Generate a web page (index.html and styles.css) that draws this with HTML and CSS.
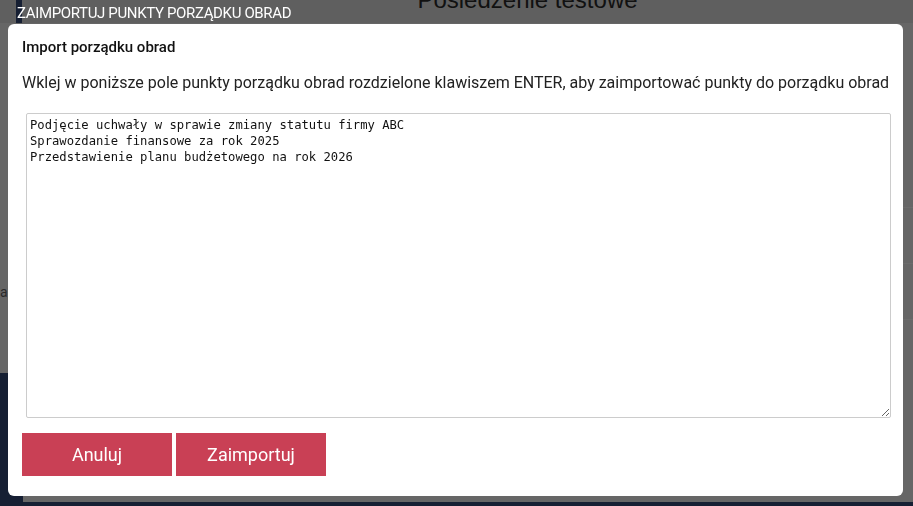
FILE: index.html
```html
<!DOCTYPE html>
<html>
<head>
	<title>Import porządku obrad</title>
	<link rel="stylesheet" href="styles.css">
</head>
<body>
	<div class="page">
		<div class="page_top">
			<div class="page_mark"></div>
			<h1 class="page_heading">Posiedzenie testowe</h1>
		</div>
		<div class="page_body">
			<div class="page_side"></div>
			<div class="page_rows">
				<div class="page_row"></div>
				<div class="page_row"><span class="page_letter">a</span></div>
				<div class="page_row"></div>
			</div>
		</div>
		<div class="page_footer"></div>
	</div>

	<div class="overlay">
		<div class="overlay_title">ZAIMPORTUJ PUNKTY PORZĄDKU OBRAD</div>
		<div class="dialog">
			<h2 class="dialog_title">Import porządku obrad</h2>
			<p class="dialog_text">Wklej w poniższe pole punkty porządku obrad rozdzielone klawiszem ENTER, aby zaimportować punkty do porządku obrad</p>
			<textarea class="dialog_input">Podjęcie uchwały w sprawie zmiany statutu firmy ABC
Sprawozdanie finansowe za rok 2025
Przedstawienie planu budżetowego na rok 2026</textarea>
			<div class="dialog_buttons">
				<button class="dialog_button">Anuluj</button>
				<button class="dialog_button">Zaimportuj</button>
			</div>
		</div>
	</div>
</body>
</html>
```
FILE: styles.css
```css
*{
	margin: 0px;
	padding: 0px;
	box-sizing: border-box;
}
html, body
{
	width: 913px;
	height: 506px;
	overflow: hidden;
	font-family: Roboto, "Liberation Sans", sans-serif;
}
.page
{
	display: flex;
	flex-direction: column;
	width: 913px;
	height: 506px;
	background-color: #666;
}
.page_top
{
	position: relative;
	height: 23px;
	background-color: #5f5f5f;
	display: flex;
	justify-content: center;
}
.page_mark
{
	position: absolute;
	left: 16px;
	top: 0px;
	width: 6px;
	height: 23px;
	background-color: #161f33;
}
.page_heading
{
	margin-top: -14px;
	margin-left: 142px;
	font-family: "Liberation Sans", Arial, sans-serif;
	font-weight: normal;
	font-size: 24px;
	color: #111;
	white-space: nowrap;
}
.page_body
{
	flex: 1;
	display: flex;
}
.page_side
{
	width: 23px;
	margin-top: 350px;
	background-color: #161f33;
}
.page_rows
{
	flex: 1;
	display: flex;
	flex-direction: column;
	padding-top: 184px;
}
.page_row
{
	height: 56px;
	border-top: 1px solid #6c6c6c;
}
.page_letter
{
	display: block;
	margin: 20px 0 0 -23px;
	font-size: 14px;
	color: #2a2a2a;
}
.page_footer
{
	height: 4px;
	background-color: #161f33;
}
.overlay
{
	position: fixed;
	top: 0px;
	left: 0px;
	width: 913px;
	height: 506px;
}
.overlay_title
{
	height: 24px;
	padding: 4px 0 0 17px;
	font-size: 15px;
	letter-spacing: -0.35px;
	color: #fff;
	white-space: nowrap;
}
.dialog
{
	margin-left: 8px;
	width: 895px;
	height: 472px;
	background-color: #fff;
	border-radius: 6px;
	padding: 14px 14px 0 14px;
	display: flex;
	flex-direction: column;
}
.dialog_title
{
	font-size: 15px;
	font-weight: 500;
	color: #111;
	height: 20px;
}
.dialog_text
{
	margin-top: 15px;
	font-size: 16px;
	color: #222;
	white-space: nowrap;
}
.dialog_input
{
	margin: 21px 0 0 4px;
	width: 865px;
	height: 305px;
	padding: 3px 3px;
	border: 1px solid #ccc;
	border-radius: 2px;
	font-family: "DejaVu Sans Mono", "Liberation Mono", monospace;
	font-size: 12.2px;
	line-height: 16px;
	color: #111;
	resize: both;
	outline: none;
}
.dialog_buttons
{
	display: flex;
	gap: 4px;
	margin-top: 15px;
}
.dialog_button
{
	width: 150px;
	height: 43px;
	border: none;
	background-color: #c94055;
	color: #fff;
	font-family: Roboto, "Liberation Sans", sans-serif;
	font-size: 18px;
}
```
